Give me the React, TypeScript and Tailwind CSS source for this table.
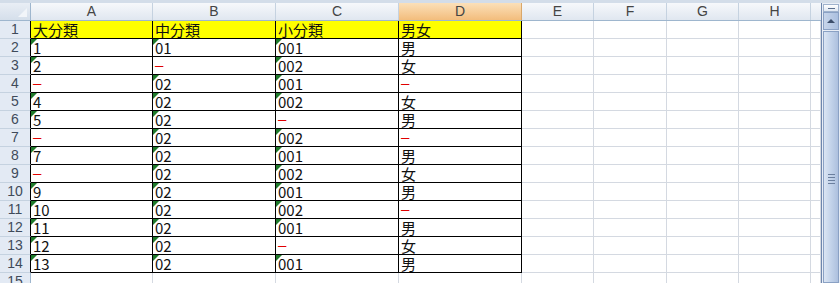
const rows: string[][] = [
  ['大分類', '中分類', '小分類', '男女'],
  ['1', '01', '001', '男'],
  ['2', '-', '002', '女'],
  ['-', '02', '001', '-'],
  ['4', '02', '002', '女'],
  ['5', '02', '-', '男'],
  ['-', '02', '002', '-'],
  ['7', '02', '001', '男'],
  ['-', '02', '002', '女'],
  ['9', '02', '001', '男'],
  ['10', '02', '002', '-'],
  ['11', '02', '001', '男'],
  ['12', '02', '-', '女'],
  ['13', '02', '001', '男'],
];

const colW = ['w-[122px]', 'w-[123px]', 'w-[123px]', 'w-[123px]'];
const emptyW = ['w-[72px]', 'w-[73px]', 'w-[72px]', 'w-[72px]', 'flex-1'];
const letters = ['A', 'B', 'C', 'D', 'E', 'F', 'G', 'H'];
const letterW = [...colW, 'w-[72px]', 'w-[73px]', 'w-[72px]', 'w-[72px]'];

const font = { fontFamily: '"Noto Sans CJK JP", "Noto Sans", sans-serif' };

function DataCell({ value, header, w }: { value: string; header: boolean; w: string }) {
  const isNum = /^\d+$/.test(value);
  return (
    <div
      className={`${w} relative shrink-0 h-full border-r border-b border-black flex items-end pl-[2px] text-[15px] leading-[16px] text-black ${
        header ? 'bg-[#ffff00]' : 'bg-white'
      }`}
    >
      {isNum && (
        <div className="absolute left-0 top-0 w-0 h-0 border-t-[6px] border-r-[6px] border-t-[#1f7a2b] border-r-transparent" />
      )}
      {value === '-' ? (
        <span className="text-[#e00000] font-['Liberation_Sans'] leading-[16px] mb-[1px]">–</span>
      ) : (
        <span className="font-normal text-[#111]">{value}</span>
      )}
    </div>
  );
}

function Scrollbar() {
  return (
    <div className="w-[19px] shrink-0 flex flex-col border-l border-[#6f87ad] bg-[#e9eef6]">
      <div className="h-[8px] mx-[1px] mt-[1px] bg-gradient-to-b from-[#ffffff] to-[#dfe7f2] border border-[#9fb2cd] flex items-center justify-center">
        <div className="w-[7px] h-[1px] bg-[#5a6f8f]" />
      </div>
      <div className="h-[18px] mx-[1px] bg-gradient-to-r from-[#c7d5ea] to-[#aabfdf] border border-[#8aa1c4] flex items-center justify-center">
        <div className="w-0 h-0 border-l-[4px] border-r-[4px] border-b-[4px] border-l-transparent border-r-transparent border-b-[#3c4e6b]" />
      </div>
      <div className="flex-1 mx-[1px] mt-[1px] bg-gradient-to-r from-[#dbe5f3] via-[#c3d3ea] to-[#adc0de] border border-[#8aa1c4] flex flex-col items-center pt-[142px] gap-[2px]">
        <div className="w-[7px] h-[1px] bg-[#6b7f9e]" />
        <div className="w-[7px] h-[1px] bg-[#6b7f9e]" />
        <div className="w-[7px] h-[1px] bg-[#6b7f9e]" />
        <div className="w-[7px] h-[1px] bg-[#6b7f9e]" />
      </div>
    </div>
  );
}

export default function App() {
  return (
    <div className="w-[840px] h-[283px] overflow-hidden bg-white flex flex-col" style={font}>
      <div className="h-[3px] shrink-0 bg-[#d3dde9]" />
      <div className="flex flex-1 min-h-0">
        <div className="flex-1 flex flex-col min-w-0">
          {/* column headers */}
          <div className="h-[18px] shrink-0 flex border-b border-[#9eb6ce]">
            <div className="w-[31px] shrink-0 relative bg-gradient-to-b from-[#e9eef5] to-[#d5dfeb] border-r border-[#9eb6ce]">
              <div className="absolute right-[3px] bottom-[3px] w-0 h-0 border-b-[9px] border-l-[9px] border-b-[#f2f5f9] border-l-transparent" />
            </div>
            {letters.map((l, i) => (
              <div
                key={l}
                className={`${letterW[i]} shrink-0 flex items-center justify-center text-[14px] font-['Liberation_Sans'] border-r ${
                  l === 'D'
                    ? 'bg-gradient-to-b from-[#fbe0b9] to-[#f3bd7c] border-[#d9a76a] text-[#444]'
                    : 'bg-gradient-to-b from-[#f6f8fb] to-[#e0e7f0] border-[#c5d2e0] text-[#444]'
                }`}
              >
                {l}
              </div>
            ))}
            <div className="flex-1 bg-gradient-to-b from-[#f6f8fb] to-[#e0e7f0]" />
          </div>
          {/* rows */}
          {[...rows, null].map((r, ri) => (
            <div key={ri} className="h-[18px] shrink-0 flex">
              <div
                className={`w-[31px] shrink-0 flex items-center justify-center bg-[#e3eaf4] text-[14px] text-[#3f4a5a] font-['Liberation_Sans'] border-b border-[#c5d2e0] border-r ${
                  r ? 'border-r-black' : 'border-r-[#9eb6ce]'
                }`}
              >
                {ri + 1}
              </div>
              {r
                ? r.map((v, ci) => <DataCell key={ci} value={v} header={ri === 0} w={colW[ci]} />)
                : colW.map((w, ci) => (
                    <div key={ci} className={`${w} shrink-0 h-full border-r border-[#d4d9e1]`} />
                  ))}
              {emptyW.map((w, ci) => (
                <div key={ci} className={`${w} shrink-0 h-full border-r border-b border-[#d4d9e1]`} />
              ))}
            </div>
          ))}
        </div>
        <Scrollbar />
      </div>
    </div>
  );
}
